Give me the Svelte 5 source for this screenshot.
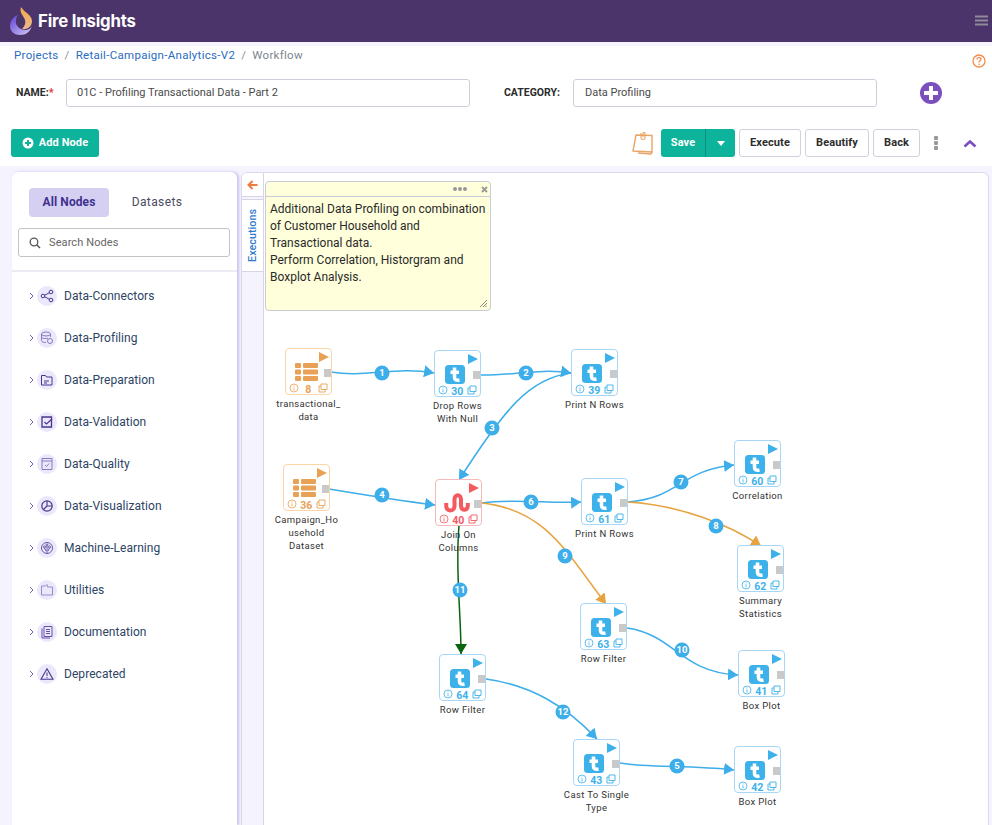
<script>
  const groups = ['Data-Connectors','Data-Profiling','Data-Preparation','Data-Validation','Data-Quality','Data-Visualization','Machine-Learning','Utilities','Documentation','Deprecated'];
  const nodes = [
    {x:285,y:348,n:8,k:'d',l:['transactional_','data']},
    {x:434,y:350,n:30,k:'t',l:['Drop Rows','With Null']},
    {x:571,y:349,n:39,k:'t',l:['Print N Rows']},
    {x:283,y:464,n:36,k:'d',l:['Campaign_Ho','usehold','Dataset']},
    {x:435,y:479,n:40,k:'j',l:['Join On','Columns']},
    {x:581,y:478,n:61,k:'t',l:['Print N Rows']},
    {x:734,y:440,n:60,k:'t',l:['Correlation']},
    {x:737,y:545,n:62,k:'t',l:['Summary','Statistics']},
    {x:580,y:603,n:63,k:'t',l:['Row Filter']},
    {x:738,y:650,n:41,k:'t',l:['Box Plot']},
    {x:439,y:654,n:64,k:'t',l:['Row Filter']},
    {x:573,y:739,n:43,k:'t',l:['Cast To Single','Type']},
    {x:734,y:746,n:42,k:'t',l:['Box Plot']}
  ];
  const edges = [
    {d:'M331 372C365 378 395 366 434 373',c:'b',t:'1',x:382,y:373},
    {d:'M480 375C510 376 540 368 571 373',c:'b',t:'2',x:526,y:373},
    {d:'M571 373C530 378 505 408 459 480',c:'b',t:'3',x:492,y:428},
    {d:'M329 489C365 495 395 500 435 505',c:'b',t:'4',x:382,y:495},
    {d:'M620 763C650 768 690 765 734 770',c:'b',t:'5',x:677,y:766},
    {d:'M482 503C515 498 550 504 581 502',c:'b',t:'6',x:531,y:502},
    {d:'M628 502C680 498 680 470 734 465',c:'b',t:'7',x:681,y:482},
    {d:'M628 502C680 505 730 525 761 546',c:'o',t:'8',x:716,y:526},
    {d:'M482 503C545 510 565 550 606 604',c:'o',t:'9',x:565,y:556},
    {d:'M627 628C675 635 680 672 738 675',c:'b',t:'10',x:682,y:650},
    {d:'M459 526C455 570 461 610 461 654',c:'g',t:'11',x:460,y:590},
    {d:'M486 679C530 685 565 705 597 739',c:'b',t:'12',x:563,y:712}
  ];
</script>

<div class="page">
  <header class="top">
    <div class="brand">
      <svg width="24" height="30" viewBox="0 0 24 30">
        <defs>
          <linearGradient id="fl" x1="0" y1="0" x2="0" y2="1"><stop offset="0" stop-color="#f6a84a"/><stop offset="1" stop-color="#e9b98c"/></linearGradient>
          <linearGradient id="bw" x1="0" y1="0" x2="1" y2="1"><stop offset="0" stop-color="#5b3fd6"/><stop offset="1" stop-color="#d9ccf6"/></linearGradient>
        </defs>
        <path d="M11 1C9 7 14 10 15 14C16 18 14 21 12 23C18 24 22 20 22 15C22 9 15 7 11 1Z" fill="url(#fl)"/>
        <path d="M8 9C3 11 0 15 0 20C0 26 5 29 10 29C16 29 20 26 22 20C20 24 15 25 11 23C7 21 5 17 6 14C6 12 7 10 8 9Z" fill="url(#bw)"/>
      </svg>
      <span>Fire Insights</span>
    </div>
    <svg class="burger" width="13" height="11" viewBox="0 0 13 11"><path d="M0 1.5H13M0 5.5H13M0 9.5H13" stroke="#8f8a9c" stroke-width="2"/></svg>
  </header>

  <section class="head">
    <nav class="crumbs"><a>Projects</a><i>/</i><a>Retail-Campaign-Analytics-V2</a><i>/</i><span>Workflow</span></nav>
    <svg class="help" width="14" height="14" viewBox="0 0 14 14"><circle cx="7" cy="7" r="6" fill="none" stroke="#f58a4b" stroke-width="1.3"/><path d="M5 5.5C5 2.8 9 3 9 5.3C9 6.8 7 6.8 7 8.4" fill="none" stroke="#f58a4b" stroke-width="1.3"/><circle cx="7" cy="10.3" r=".8" fill="#f58a4b"/></svg>
    <div class="form">
      <label class="l1">NAME:<b>*</b></label>
      <div class="field f1">01C - Profiling Transactional Data - Part 2</div>
      <label class="l2">CATEGORY:</label>
      <div class="field f2">Data Profiling</div>
      <span class="plus"></span>
    </div>
    <div class="tools">
      <button class="green add"><svg width="12" height="12" viewBox="0 0 12 12"><circle cx="6" cy="6" r="5.5" fill="#fff"/><path d="M6 3V9M3 6H9" stroke="#0db39b" stroke-width="2"/></svg><span>Add Node</span></button>
      <div class="right">
        <svg class="stick" width="24" height="24" viewBox="0 0 24 24"><path d="M5 4L21 4.5L21 21L2 20Z" fill="#fff" stroke="#e8a566" stroke-width="1.4"/><path d="M21 21L20 23L7 22" fill="none" stroke="#e8a566" stroke-width="1.4"/><path d="M10 2V7C10 9 14 9 14 7V2.5C14 1 12 1 12 2.5V6" fill="none" stroke="#e8a566" stroke-width="1.1"/></svg>
        <div class="split"><button class="green save">Save</button><button class="green caret"><span></span></button></div>
        <button class="plain b1">Execute</button>
        <button class="plain b2">Beautify</button>
        <button class="plain b3">Back</button>
        <span class="dots"><i></i><i></i><i></i></span>
        <svg class="chev" width="14" height="9" viewBox="0 0 14 9"><path d="M1.5 7.5L7 2.5L12.5 7.5" fill="none" stroke="#7a4fc0" stroke-width="2.6"/></svg>
      </div>
    </div>
  </section>

  <main class="body">
    <aside class="side">
      <div class="tabs"><span class="tab on">All Nodes</span><span class="tab">Datasets</span></div>
      <div class="search">
        <svg width="12" height="12" viewBox="0 0 12 12"><circle cx="5" cy="5" r="3.8" fill="none" stroke="#555" stroke-width="1.3"/><path d="M8 8L11 11" stroke="#555" stroke-width="1.4"/></svg>
        <span>Search Nodes</span>
      </div>
      <ul>
        {#each groups as g, i}
          <li>
            <svg class="arrow" width="5" height="8" viewBox="0 0 5 8"><path d="M1 1L4 4L1 7" fill="none" stroke="#7b5cc4" stroke-width="1"/></svg>
            <span class="badge">
              <svg width="14" height="14" viewBox="0 0 14 14" fill="none" stroke="#4a348f" stroke-width="1">
                {#if i===0}<circle cx="3" cy="7" r="1.8"/><circle cx="11" cy="3" r="1.8"/><circle cx="11" cy="11" r="1.8"/><path d="M4.6 6.2L9.4 3.8M4.6 7.8L9.4 10.2"/>
                {:else if i===1}<g stroke="#8a78c0"><ellipse cx="6" cy="3" rx="4.5" ry="2"/><path d="M1.5 3V9.5C1.5 11 4 11.5 6 11.5M10.5 3V6M1.5 6.2C2.5 7.6 6 7.8 8 7.3"/><circle cx="10" cy="10" r="2.5"/></g>
                {:else if i===2}<path d="M1.5 2.5H5.5L6.5 4H12V12H1.5ZM4 8H9M4 10H7"/>
                {:else if i===3}<path d="M2 2H11.5V12H2Z" stroke-width="1.3"/><path d="M4.5 7L6.5 9L12 4" stroke-width="1.2"/>
                {:else if i===4}<g stroke="#8a78c0"><path d="M2 1.5H12V12.5H2ZM2 4H12"/><path d="M5 8L6.5 9.5L9 6.5"/></g>
                {:else if i===5}<circle cx="7" cy="7" r="5.2" stroke-width="1.2"/><path d="M7 2V7H12M7 7L3.5 10.5" stroke-width="1.1"/>
                {:else if i===6}<g stroke="#6c58a8"><circle cx="7" cy="7" r="5.5"/><circle cx="4.5" cy="6" r="1"/><circle cx="9.5" cy="6" r="1"/><circle cx="7" cy="4" r="1"/><path d="M7 5V12M4.5 7L6 10M9.5 7L8 10"/></g>
                {:else if i===7}<path d="M1.5 3H5.5L7 1.5L7.5 4H12.5V12H1.5Z" stroke="#9a8bc8"/>
                {:else if i===8}<g stroke="#6650a8"><path d="M4 1.5H12V11.5H4ZM2 3.5V13H10"/><path d="M6 4.5H10M6 6.5H10M6 8.5H10"/></g>
                {:else}<path d="M7 1.8L13 12.2H1Z" stroke-width="1.1"/><path d="M7 5.5V9M7 10V11"/>{/if}
              </svg>
            </span>
            <span class="gname">{g}</span>
          </li>
        {/each}
      </ul>
    </aside>

    <section class="canvas">
      <div class="rail">
        <div class="back"><svg width="11" height="10" viewBox="0 0 11 10"><path d="M5.5 1L1.5 5L5.5 9M2 5H10.5" fill="none" stroke="#ec7a41" stroke-width="2"/></svg></div>
        <div class="exec"><span>Executions</span></div>
      </div>

      <svg class="wires" width="747" height="652" viewBox="242 173 747 652">
        <defs>
          <marker id="ab" markerUnits="userSpaceOnUse" markerWidth="11" markerHeight="12" refX="10" refY="6" orient="auto"><path d="M0 0L10 6L0 12Z" fill="#3daee9"/></marker>
          <marker id="ao" markerUnits="userSpaceOnUse" markerWidth="11" markerHeight="12" refX="10" refY="6" orient="auto"><path d="M0 0L10 6L0 12Z" fill="#e6a33e"/></marker>
          <marker id="ag" markerUnits="userSpaceOnUse" markerWidth="11" markerHeight="12" refX="10" refY="6" orient="auto"><path d="M0 0L10 6L0 12Z" fill="#0b6410"/></marker>
        </defs>
        {#each edges as e}
          <path class={'w ' + e.c} d={e.d} marker-end={`url(#a${e.c})`}/>
        {/each}
        {#each edges as e}
          <circle cx={e.x} cy={e.y} r="7.5" fill="#3daee9"/>
          <text x={e.x} y={e.y + 3.4} class="num">{e.t}</text>
        {/each}
      </svg>

      <article class="note">
        <div class="nhead"><span class="nd"><i></i><i></i><i></i></span><svg width="7" height="7" viewBox="0 0 7 7"><path d="M1 1L6 6M6 1L1 6" stroke="#999" stroke-width="1.8"/></svg></div>
        <p>Additional Data Profiling on combination of Customer Household and Transactional data.<br>Perform Correlation, Historgram and Boxplot Analysis.</p>
        <svg class="grip" width="7" height="7" viewBox="0 0 7 7"><path d="M0 7L7 0M3 7L7 3M5.5 7L7 5.5" stroke="#666" stroke-width=".8"/></svg>
      </article>

      {#each nodes as n}
        <div class={'node ' + n.k} style={`left:${n.x - 242}px;top:${n.y - 173}px`}>
          <span class="play"></span>
          <span class="port"></span>
          <span class="ico">
            {#if n.k==='t'}
              <svg width="20" height="19" viewBox="0 0 20 19"><rect width="20" height="19" rx="3.5" fill="#3db1ea"/><path d="M9.5 2.5V12.5C9.5 15 11.5 15.6 14.5 15M5.5 7.2H14" fill="none" stroke="#fff" stroke-width="3.6"/></svg>
            {:else if n.k==='d'}
              <svg width="24" height="18" viewBox="0 0 24 18" fill="#e8a156"><rect x="0" y="0" width="6" height="5" rx="1"/><rect x="8" y="0" width="15" height="5" rx="1"/><rect x="0" y="6.5" width="6" height="5" rx="1"/><rect x="8" y="6.5" width="15" height="5" rx="1"/><rect x="0" y="13" width="6" height="5" rx="1"/><rect x="8" y="13" width="15" height="5" rx="1"/></svg>
            {:else}
              <svg width="26" height="20" viewBox="0 0 26 20"><path d="M2.2 10V13C2.2 19 10.5 19 10.5 13V6.5C10.5 .8 17 .8 17 6.5V13C17 18 23.8 18 23.8 13V10" fill="none" stroke="#f4595f" stroke-width="4"/></svg>
            {/if}
          </span>
          <div class="foot">
            <svg width="10" height="10" viewBox="0 0 10 10" fill="none" stroke="currentColor" stroke-width=".8"><circle cx="5" cy="5" r="4"/><path d="M5 4.3V7.5M5 2.5V3.4"/></svg>
            <b>{n.n}</b>
            <svg width="10" height="10" viewBox="0 0 10 10" fill="none" stroke="currentColor" stroke-width=".9"><path d="M3 1H9V6.5H3ZM3 3H1V9H7V6.5"/></svg>
          </div>
          <div class="lbl">{#each n.l as t}<div>{t}</div>{/each}</div>
        </div>
      {/each}
    </section>
  </main>
</div>

<style>
  :global(body){margin:0;background:#f5f3fe;}
  .page{width:992px;height:825px;overflow:hidden;font-family:Roboto,"Liberation Sans",sans-serif;background:#f5f3fe;display:flex;flex-direction:column;}
  .top{height:42px;background:#4b3469;display:flex;align-items:center;justify-content:space-between;padding:0 4px 0 10px;flex:none;}
  .brand{display:flex;align-items:center;gap:4px;color:#fff;font:700 16.8px Inter,Roboto,sans-serif;letter-spacing:-.2px;}
  .burger{margin-top:-1px;}
  .head{margin-top:4px;height:120px;background:#fff;flex:none;position:relative;box-sizing:border-box;}
  .crumbs{display:flex;gap:6px;padding:2px 0 0 14px;font-size:11.5px;line-height:14px;letter-spacing:.3px;color:#2a6cc0;}
  .crumbs i{font-style:normal;color:#8a8f98;}
  .crumbs span{color:#80858f;}
  .help{position:absolute;right:6px;top:8px;}
  .form{display:flex;align-items:center;margin-top:17px;height:28px;font-size:11px;color:#333;}
  .form label{font-weight:700;font-size:10.5px;color:#2b2b2b;position:relative;top:-1px;}
  .form label b{color:#e03a3a;}
  .l1{margin-left:16px;width:50px;}
  .l2{margin-left:34px;width:69px;}
  .field{box-sizing:border-box;height:28px;border:1px solid #cdd0da;border-radius:3px;line-height:25px;padding-left:10px;font-size:11px;color:#4a4a4a;}
  .f1{width:404px;}
  .f2{width:304px;padding-left:11px;}
  .plus{width:22px;height:22px;margin-left:43px;border-radius:50%;background:#7a50bf;position:relative;}
  .plus::before{content:"";position:absolute;left:4px;right:4px;top:9px;height:4px;background:#fff;}
  .plus::after{content:"";position:absolute;top:4px;bottom:4px;left:9px;width:4px;background:#fff;}
  .tools{display:flex;justify-content:space-between;align-items:center;margin-top:22px;padding:0 15px 0 11px;height:28px;}
  button{font-family:inherit;font-size:11px;font-weight:700;height:28px;box-sizing:border-box;border-radius:3px;padding:0 0 2px;cursor:pointer;letter-spacing:.1px;}
  .green{background:#0db39b;color:#fff;border:0;}
  .add{width:88px;display:flex;align-items:center;justify-content:center;gap:5px;padding:0;}
  .add span{position:relative;top:-1px;}
  .right{display:flex;align-items:center;}
  .stick{margin-right:6px;}
  .split{display:flex;margin-right:4px;}
  .save{width:45px;border-radius:3px 0 0 3px;border-right:1px solid #0a917e;}
  .caret{width:29px;border-radius:0 3px 3px 0;display:flex;align-items:center;justify-content:center;padding:0;}
  .caret span{border-left:4px solid transparent;border-right:4px solid transparent;border-top:5px solid #fff;}
  .plain{background:#fff;border:1px solid #cfd2da;color:#2d2d2d;margin-right:4px;}
  .b1{width:62px;}.b2{width:64px;}.b3{width:47px;margin-right:14px;}
  .dots{display:flex;flex-direction:column;gap:1.5px;width:5px;}
  .dots i{height:3.5px;width:4px;background:#999;border-radius:1px;}
  .chev{margin-left:24px;}
  .body{flex:1;display:flex;padding:6px 3px 0 12px;gap:4px;min-height:0;}
  .side{width:225px;flex:none;background:#fff;border-radius:6px 6px 0 0;box-shadow:2px 0 3px #c9c3ea,0 0 1px #dcd8f0;}
  .tabs{display:flex;padding:16px 0 0 17px;}
  .tab{width:80px;height:29px;line-height:29px;text-align:center;border-radius:4px;font-size:12px;font-weight:400;color:#4b4a63;letter-spacing:.4px;margin-right:8px;}
  .tab.on{background:#d5d0f2;color:#41308f;font-weight:700;letter-spacing:.1px;}
  .search{margin:11px 7px 0 6px;height:29px;box-sizing:border-box;border:1px solid #c4c4c4;border-radius:3px;display:flex;align-items:center;padding-left:10px;gap:8px;font-size:11px;color:#666;letter-spacing:.1px;}
  ul{list-style:none;margin:13px 0 0;padding:3px 0 0;border-top:2px solid #eceaf3;}
  li{height:42px;display:flex;align-items:center;padding-left:17px;color:#2d4464;font-size:12px;letter-spacing:.05px;}
  .arrow{margin-right:3px;}
  .badge{width:20px;height:20px;border-radius:50%;background:#ebe8fb;display:flex;align-items:center;justify-content:center;margin-right:7px;}
  .canvas{flex:1;position:relative;background:#fff;border:1px solid #dcd9ec;border-bottom:0;border-radius:6px 6px 0 0;overflow:hidden;}
  .rail{position:absolute;left:0;top:0;bottom:0;width:21px;background:#f5f3fe;border-right:1px solid #d6d4e6;}
  .back{height:24px;background:#fff;display:flex;align-items:center;justify-content:center;border-bottom:1px solid #d6d4e6;box-sizing:border-box;}
  .exec{margin-top:2px;height:71px;background:#fff;border:1px solid #d6d4e6;border-left:0;border-right:0;display:flex;align-items:center;justify-content:center;}
  .exec span{writing-mode:vertical-rl;transform:rotate(180deg);font-size:10.8px;font-weight:500;color:#2f7bcb;}
  .wires{position:absolute;left:0;top:0;}
  .w{fill:none;stroke-width:1.5;}
  .w.b{stroke:#3daee9;}.w.o{stroke:#e6a33e;}.w.g{stroke:#0b6410;}
  .num{font:700 9.5px Roboto,sans-serif;fill:#fff;text-anchor:middle;}
  .note{position:absolute;left:23px;top:8px;width:226px;height:130px;box-sizing:border-box;background:#ffffdc;border:1px solid #c9cbd6;border-radius:4px;}
  .nhead{height:14px;border-bottom:1px solid #c9cbd6;display:flex;align-items:center;justify-content:flex-end;gap:14px;padding-right:2px;}
  .nd{display:flex;gap:1px;}
  .nd i{width:4px;height:4px;background:#999;border-radius:50%;}
  .note p{margin:4px 0 0;padding:0 4px;font-size:12px;line-height:17px;color:#2a2a2a;}
  .grip{position:absolute;right:3px;bottom:3px;}
  .node{position:absolute;box-sizing:border-box;width:47px;height:47px;background:#fff;border:1.5px solid #a7d6f6;border-radius:4px;color:#3db1ea;}
  .node.d{border-color:#fbd5a6;color:#e8a156;}
  .node.j{border-color:#f6b9bb;color:#f4595f;}
  .play{position:absolute;right:2px;top:3px;border-left:10px solid currentColor;border-top:5.5px solid transparent;border-bottom:5.5px solid transparent;}
  .port{position:absolute;right:0;top:19.5px;width:7px;height:8px;background:#c9c9c9;}
  .ico{position:absolute;left:9.5px;top:13.5px;display:flex;}
  .d .ico{left:8.5px;top:13.5px;}
  .j .ico{left:7.5px;top:12.5px;}
  .foot{position:absolute;left:3px;right:3.5px;bottom:0;height:12px;display:flex;align-items:center;justify-content:space-between;}
  .foot b{font-size:10.5px;font-weight:700;position:relative;top:1px;}
  .lbl{position:absolute;left:-20px;right:-20px;top:48px;text-align:center;font-size:9.5px;line-height:13px;letter-spacing:.35px;color:#333;}
</style>
